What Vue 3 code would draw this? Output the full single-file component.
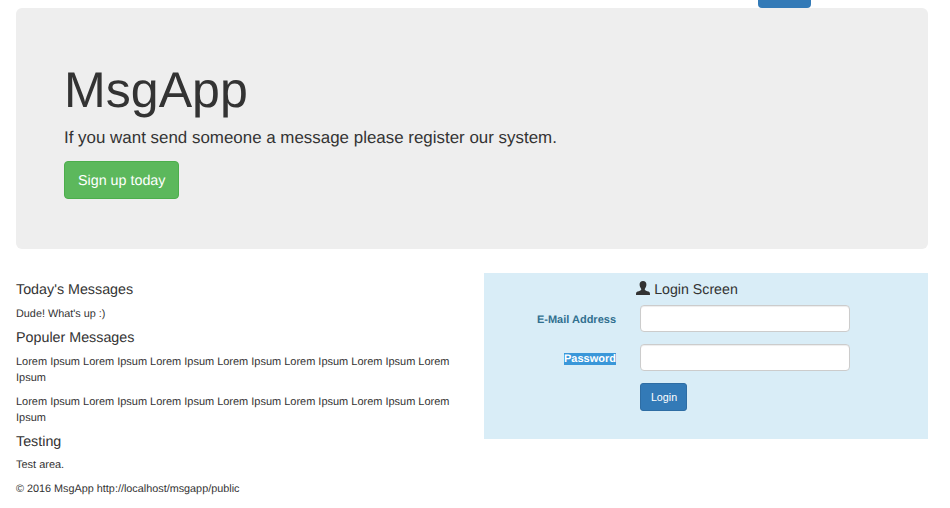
<script setup>
const lorem = 'Lorem Ipsum Lorem Ipsum Lorem Ipsum Lorem Ipsum Lorem Ipsum Lorem Ipsum Lorem Ipsum'
</script>

<template>
  <div class="page">
    <div class="topbar"><span class="topbtn"></span></div>
    <section class="jumbotron">
      <h1>MsgApp</h1>
      <p class="lead">If you want send someone a message please register our system.</p>
      <a class="signup">Sign up today</a>
    </section>
    <div class="columns">
      <div class="left">
        <h4>Today's Messages</h4>
        <p class="dude">Dude! What's up :)</p>
        <h4>Populer Messages</h4>
        <p>{{ lorem }}</p>
        <p>{{ lorem }}</p>
        <h4>Testing</h4>
        <p class="test">Test area.</p>
        <p class="foot">© 2016 MsgApp http://localhost/msgapp/public</p>
      </div>
      <div class="panel">
        <div class="title">
          <svg class="user" viewBox="0 0 16 16" width="14" height="14">
            <path fill="#333" d="M0 16c0-2.400 0.300-3.300 1.800-3.900 1.900-0.700 3.800-1.100 4.200-2.400 0.100-0.500-0.100-0.900-0.500-1.500C4.800 7.200 4.200 6 4.100 4.500 3.900 1.800 5.600 0 8 0s4.100 1.800 3.900 4.500C11.800 6 11.200 7.200 10.500 8.200c-0.400 0.600-0.600 1-0.500 1.500 0.400 1.300 2.300 1.700 4.200 2.400 1.500 0.600 1.800 1.500 1.800 3.900z"/>
          </svg>
          <span>Login Screen</span>
        </div>
        <div class="row">
          <label>E-Mail Address</label>
          <input type="text" />
        </div>
        <div class="row">
          <label><span class="sel">Password</span></label>
          <input type="password" />
        </div>
        <div class="row last">
          <span class="spacer"></span>
          <button type="button">Login</button>
        </div>
      </div>
    </div>
  </div>
</template>

<style scoped>
.page {
  font-family: "Liberation Sans", Arial, sans-serif;
  font-size: 10.98px;
  line-height: 16px;
  color: #333;
  padding: 0 22px 0 16px;
  box-sizing: border-box;
  width: 950px;
  height: 508px;
  overflow: hidden;
  text-rendering: geometricPrecision;
}
.topbar {
  height: 8px;
  display: flex;
  padding-left: 742px;
}
.topbtn {
  display: block;
  width: 53px;
  height: 8px;
  background: #337ab7;
  border-radius: 0 0 4px 4px;
}
.jumbotron {
  background: #eee;
  border-radius: 6px;
  height: 241px;
  padding: 48px;
  box-sizing: border-box;
  margin-bottom: 24px;
}
h1 {
  margin: 7px 0 0;
  font-size: 50.1px;
  font-weight: 400;
  line-height: 55px;
}
.lead {
  margin: 8px 0 0;
  font-size: 16.93px;
  line-height: 24px;
}
.signup {
  display: inline-block;
  margin-top: 11px;
  box-sizing: border-box;
  height: 38px;
  padding: 0 13px;
  line-height: 38px;
  font-size: 14.3px;
  color: #fff;
  background: #5cb85c;
  border: 1px solid #4cae4c;
  border-radius: 4px;
}
.columns {
  display: flex;
  gap: 16px;
  align-items: flex-start;
}
.left {
  width: 452px;
  flex: none;
  padding-top: 1px;
}
.left p {
  margin: 0 0 8px;
}
.left .dude {
  font-size: 10.85px;
}
.left .foot {
  font-size: 10.83px;
}
h4 {
  margin: 8px 0;
  font-size: 14.3px;
  font-weight: 400;
  line-height: 16px;
}
h4 + .test {
  margin-top: -1px;
}
.panel {
  width: 444px;
  height: 166px;
  background: #d9edf7;
  box-sizing: border-box;
}
.title {
  display: flex;
  align-items: center;
  justify-content: center;
  gap: 4px;
  height: 32px;
  box-sizing: border-box;
  padding: 1px 38px 0 0;
  font-size: 14.2px;
}
.user {
  margin-top: -3px;
}
.row {
  display: flex;
  align-items: center;
  margin-bottom: 13px;
  height: 26px;
}
.row label {
  width: 132px;
  margin-right: 24px;
  padding-top: 4px;
  text-align: right;
  font-size: 11px;
  font-weight: 700;
  color: #31708f;
}
.sel {
  background: #3a97d9;
  color: #fff;
}
.spacer {
  width: 156px;
}
input {
  width: 210px;
  height: 27px;
  box-sizing: border-box;
  border: 1px solid #ccc;
  border-radius: 4px;
  background: #fff;
  box-shadow: inset 0 1px 1px rgba(0, 0, 0, 0.075);
  outline: none;
}
button {
  width: 47px;
  height: 28px;
  margin-top: 2px;
  padding: 0 0 0 1px;
  font: inherit;
  font-size: 10.7px;
  color: #fff;
  background: #337ab7;
  border: 1px solid #2e6da4;
  border-radius: 3px;
}
</style>
